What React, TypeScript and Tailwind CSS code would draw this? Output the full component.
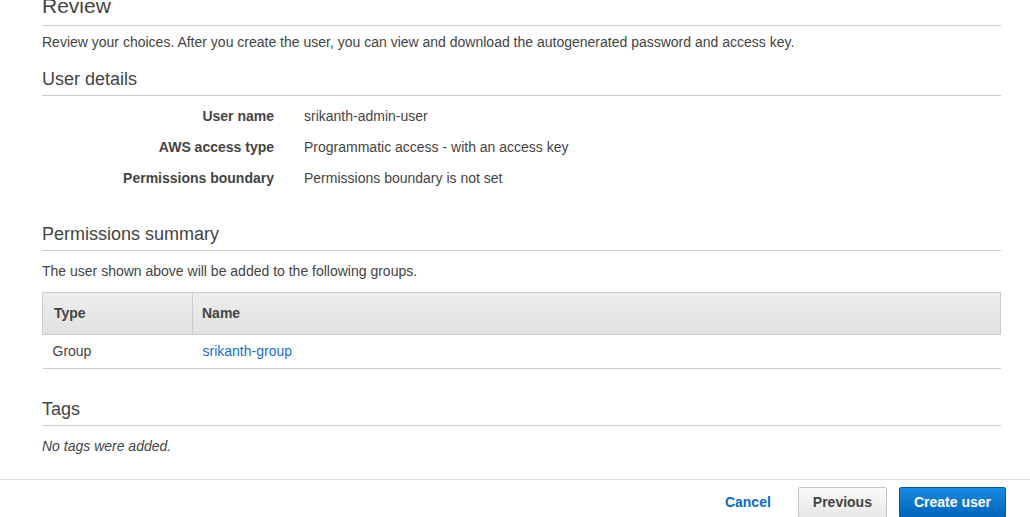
const details = [
  { label: "User name", value: "srikanth-admin-user" },
  { label: "AWS access type", value: "Programmatic access - with an access key" },
  { label: "Permissions boundary", value: "Permissions boundary is not set" },
];

function SectionHeading({ title, className = "" }: { title: string; className?: string }) {
  return (
    <div className={`border-b border-[#cccccc] pb-[5px] ${className}`}>
      <h2 className="text-[18px] leading-[22px] font-normal text-[#444444]">{title}</h2>
    </div>
  );
}

export default function App() {
  return (
    <div className="w-full overflow-hidden bg-white font-['Liberation_Sans',Arial,sans-serif] text-[14px] text-[#444444]">
      <div className="pl-[42px] pr-[29px]">
        <div className="-mt-[6px] border-b border-[#cccccc] pb-[7px]">
          <h1 className="text-[21px] leading-[24px] font-normal text-[#444444]">Review</h1>
        </div>
        <p className="mt-[6px] leading-[20px]">
          Review your choices. After you create the user, you can view and download the
          autogenerated password and access key.
        </p>

        <SectionHeading title="User details" className="mt-[16px]" />
        <dl className="mt-[5px]">
          {details.map((d) => (
            <div key={d.label} className="flex h-[31px] items-center leading-[31px]">
              <dt className="w-[232px] text-right font-bold">{d.label}</dt>
              <dd className="ml-[30px]">{d.value}</dd>
            </div>
          ))}
        </dl>

        <SectionHeading title="Permissions summary" className="mt-[29px]" />
        <p className="mt-[10px] leading-[20px]">
          The user shown above will be added to the following groups.
        </p>

        <table className="mt-[11px] w-full border-collapse">
          <thead>
            <tr className="h-[42px] bg-gradient-to-b from-[#eeeeee] to-[#e1e1e1]">
              <th className="w-[150px] border border-[#cccccc] pl-[11px] text-left font-bold">
                Type
              </th>
              <th className="border border-[#cccccc] pl-[9px] text-left font-bold">Name</th>
            </tr>
          </thead>
          <tbody>
            <tr className="h-[34px] border-b border-[#cccccc]">
              <td className="pl-[10px]">Group</td>
              <td className="pl-[10px]">
                <a className="text-[#1b6fc2]" href="#">
                  srikanth-group
                </a>
              </td>
            </tr>
          </tbody>
        </table>

        <SectionHeading title="Tags" className="mt-[29px]" />
        <p className="mt-[10px] leading-[20px] italic">No tags were added.</p>
      </div>

      <div className="mt-[23px] flex items-center justify-end border-t border-[#dddddd] pt-[7px] pr-[24px]">
        <a href="#" className="mr-[27px] font-bold text-[#0b6bbf]">
          Cancel
        </a>
        <button className="h-[31px] rounded-[2px] border border-[#c6c6c6] bg-gradient-to-b from-[#fafafa] to-[#e8e8e8] px-[14px] font-bold text-[#444444]">
          Previous
        </button>
        <button className="ml-[12px] h-[31px] rounded-[2px] border border-[#0a5a9c] bg-gradient-to-b from-[#1a8ae0] to-[#0065b9] px-[14px] font-bold text-white">
          Create user
        </button>
      </div>
    </div>
  );
}
